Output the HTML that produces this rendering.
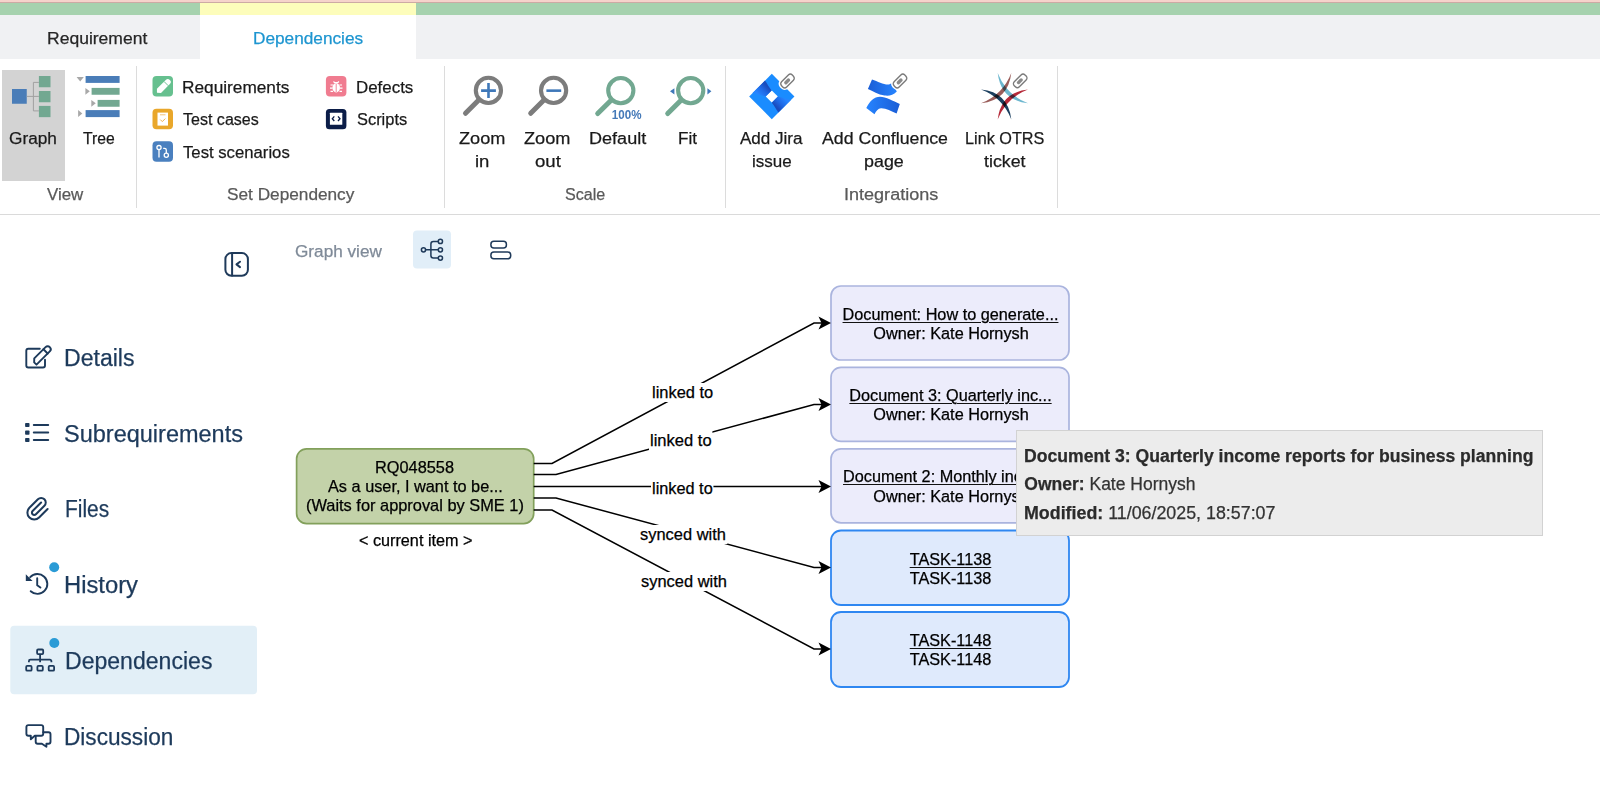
<!DOCTYPE html>
<html><head><meta charset="utf-8">
<style>
*{margin:0;padding:0;box-sizing:border-box}
html,body{width:1600px;height:792px;overflow:hidden;background:#fff}
body{position:relative;font-family:"Liberation Sans",sans-serif}
.t{position:absolute;white-space:pre;line-height:1;-webkit-text-stroke:0.25px currentColor}
.a{position:absolute}
svg{position:absolute;overflow:visible}
</style></head><body>
<!-- top bars -->
<div class="a" style="left:0;top:0;width:1600px;height:3px;background:#f6d3cb"></div>
<div class="a" style="left:0;top:2px;width:1600px;height:1px;background:#cdaaa4"></div>
<div class="a" style="left:0;top:3px;width:1600px;height:12px;background:#a6d2ae"></div>
<div class="a" style="left:0;top:15px;width:1600px;height:44px;background:#f0f1f3"></div>
<div class="a" style="left:200px;top:3px;width:216px;height:12px;background:#fdfdbb"></div>
<div class="a" style="left:200px;top:15px;width:216px;height:44px;background:#fff"></div>
<!-- ribbon -->
<div class="a" style="left:2px;top:70px;width:63px;height:111px;background:#d3d3d3"></div>
<div class="a" style="left:136px;top:66px;width:1px;height:142px;background:#dcdcdc"></div>
<div class="a" style="left:444px;top:66px;width:1px;height:142px;background:#dcdcdc"></div>
<div class="a" style="left:725px;top:66px;width:1px;height:142px;background:#dcdcdc"></div>
<div class="a" style="left:1057px;top:66px;width:1px;height:142px;background:#dcdcdc"></div>
<div class="a" style="left:0;top:214px;width:1600px;height:1px;background:#dadada"></div>

<svg width="1600" height="792" style="left:0;top:0" viewBox="0 0 1600 792">
 <!-- Graph icon -->
 <rect x="12" y="89" width="14.75" height="14.75" fill="#4a7db8"/>
 <rect x="38.9" y="76" width="11.6" height="11.25" fill="#72a891"/>
 <rect x="38.9" y="91" width="11.6" height="11.25" fill="#72a891"/>
 <rect x="38.9" y="105.9" width="11.6" height="11.25" fill="#72a891"/>
 <path d="M26.75 96.4H38.9M33.4 82.4V110.9M33.4 82.4H38.9M33.4 110.9H38.9" stroke="#a0a0a0" stroke-width="1" fill="none"/>
 <!-- Tree icon -->
 <rect x="85.6" y="76" width="34" height="6.9" fill="#4a7db8"/>
 <rect x="91.6" y="87.9" width="28" height="6.85" fill="#72a891"/>
 <rect x="97.6" y="99.9" width="22" height="6.85" fill="#72a891"/>
 <rect x="85.6" y="110.1" width="34" height="7" fill="#4a7db8"/>
 <path d="M76.6 77.1H83.8L80.2 81.6Z" fill="#a8a8a8"/>
 <path d="M85.4 87.9L89.8 91.3L85.4 94.75Z" fill="#a8a8a8"/>
 <path d="M91.3 99.9L95.8 103.3L91.3 106.75Z" fill="#a8a8a8"/>
 <path d="M78.1 110.1L82.3 113.6L78.1 117.1Z" fill="#a8a8a8"/>
 <!-- Set dependency icons -->
 <rect x="152.5" y="76" width="20.5" height="20.5" rx="4" fill="#66c08f"/>
 <g transform="translate(163.2 86.6) rotate(-45)"><path d="M-8.8 0L-6 -2.9H6.5a2.9 2.9 0 0 1 0 5.8H-6Z" fill="#fff"/><path d="M4.2 -3V3" stroke="#66c08f" stroke-width="0.9"/></g>
 <rect x="152.5" y="108.8" width="20.5" height="20.5" rx="4" fill="#e9a72b"/>
 <rect x="157.5" y="112.6" width="10.5" height="13" fill="#fff"/>
 <path d="M160 114.8h5.5" stroke="#f3c37a" stroke-width="1"/>
 <path d="M160.3 119.6l2 2 3-3" stroke="#f0b04a" stroke-width="1" fill="none"/>
 <rect x="152.5" y="141.3" width="20.5" height="20.5" rx="4" fill="#4a80bf"/>
 <circle cx="159" cy="147.6" r="2.1" fill="none" stroke="#fff" stroke-width="1.3"/>
 <path d="M159 149.7V157.4" stroke="#fff" stroke-width="1.3"/>
 <circle cx="166.3" cy="155.3" r="2.1" fill="none" stroke="#fff" stroke-width="1.3"/>
 <path d="M163.2 148.3H164.5a1.8 1.8 0 0 1 1.8 1.8V153.2" stroke="#fff" stroke-width="1.3" fill="none"/>
 <rect x="325.9" y="76" width="20.5" height="20.5" rx="4" fill="#f07c90"/>
 <path d="M333.5 81.5l1.2 1.2h3l1.2-1.2M336.2 82.2v0" stroke="#fff" stroke-width="1.2" fill="none"/>
 <ellipse cx="336.2" cy="87.8" rx="3.8" ry="4.6" fill="#fff"/>
 <path d="M330.5 85h2.5M330 88.2h2.5M330.5 91.4h2.5M339.5 85h2.5M340 88.2h2.5M339.5 91.4h2.5" stroke="#fff" stroke-width="1.2"/>
 <path d="M336.2 84v8" stroke="#f07c90" stroke-width="0.9"/>
 <rect x="325.9" y="109" width="20.5" height="20.2" rx="3.5" fill="#0b1d48"/>
 <rect x="329.9" y="112.7" width="12.4" height="12.1" rx="0.5" fill="#fff"/>
 <path d="M334.3 116.4l-2 2.3 2 2.3M338 116.4l2 2.3-2 2.3" stroke="#0b1d48" stroke-width="1.3" fill="none"/>
 <!-- Zoom icons -->
 <g fill="none" stroke="#7c7c7c">
  <circle cx="488.4" cy="90.4" r="12.6" stroke-width="4.1"/>
  <path d="M478.5 100.3L465.5 113.3" stroke-width="5" stroke-linecap="round"/>
  <circle cx="553.6" cy="90.4" r="12.6" stroke-width="4.1"/>
  <path d="M543.7 100.3L530.7 113.3" stroke-width="5" stroke-linecap="round"/>
 </g>
 <path d="M481.1 90.65H495.9M488.5 83.1V97.9" stroke="#3f78b9" stroke-width="2.6"/>
 <path d="M546.4 90.65H561.2" stroke="#3f78b9" stroke-width="2.6"/>
 <g fill="none" stroke="#72a891">
  <circle cx="620.8" cy="90.6" r="12.6" stroke-width="4.1"/>
  <path d="M610.9 100.5L597.7 113.5" stroke-width="5" stroke-linecap="round"/>
  <circle cx="690.7" cy="90.6" r="12.6" stroke-width="4.1"/>
  <path d="M680.8 100.5L667.7 113.5" stroke-width="5" stroke-linecap="round"/>
 </g>
 <text x="611.8" y="118.8" font-family="Liberation Sans" font-size="13.4" font-weight="bold" fill="#4479b8" textLength="29.7" lengthAdjust="spacingAndGlyphs">100%</text>
 <path d="M674.4 88.3V94.4L670 91.35Z M707.4 88.3V94.4L711.4 91.35Z" fill="#3f78b9"/>
 <!-- Jira -->
 <g transform="translate(771.8 96.5) rotate(45)">
  <rect x="-16" y="-16" width="32" height="32" fill="#1a8cff"/>
  <rect x="-4.3" y="-4.3" width="8.6" height="8.6" fill="#fff"/>
 </g>
 <defs>
  <linearGradient id="jg1" gradientUnits="userSpaceOnUse" x1="758.5" y1="94.3" x2="766.8" y2="86"><stop offset="0" stop-color="#2684ff"/><stop offset="0.55" stop-color="#1f68e4"/><stop offset="1" stop-color="#1a4cbd"/></linearGradient>
  <linearGradient id="jg2" gradientUnits="userSpaceOnUse" x1="784.9" y1="98.8" x2="776.6" y2="107.1"><stop offset="0" stop-color="#2684ff"/><stop offset="0.55" stop-color="#1f68e4"/><stop offset="1" stop-color="#1a4cbd"/></linearGradient>
  <linearGradient id="cg1" x1="0" y1="0" x2="1" y2="0"><stop offset="0" stop-color="#1a5dd6"/><stop offset="1" stop-color="#2684ff"/></linearGradient>
  <linearGradient id="cg2" x1="0" y1="0" x2="1" y2="0"><stop offset="0" stop-color="#2684ff"/><stop offset="1" stop-color="#1a5dd6"/></linearGradient>
 </defs>
 <path d="M752.5 93L765 80.5C767.5 84 769 87.5 771.6 90.4L765.5 96.5Z" fill="url(#jg1)"/>
 <path d="M790.9 100.1L778.4 112.6C775.9 109.1 774.4 105.6 771.8 102.7L777.9 96.6Z" fill="url(#jg2)"/>
 <!-- Confluence -->
 <path d="M872 79.5C878 81.5 884 85 889 84.5L892 83L896.8 91.5C893 95.5 889 96 884.5 95.5C878 94.5 873 91 867.9 88.9Z" fill="url(#cg1)"/>
 <path d="M866.3 107.9C870 101 874 97 880 96.8C886 96.8 893 101 899.8 104.1L896.6 113.6C891 111 886 108 881 108.2C878 108.5 876 111 874.5 114.2Z" fill="url(#cg2)"/>
 <!-- OTRS -->
 <g style="isolation:isolate">
 <path d="M997.7 73Q1000.81 100.19 1028 103.3Q1006.19 94.81 997.7 73Z" fill="#6db7cf" style="mix-blend-mode:multiply"/>
 <path d="M1011.3 73Q1008.19 100.19 981 103.3Q1002.81 94.81 1011.3 73Z" fill="#9a5d5a" style="mix-blend-mode:multiply"/>
 <path d="M981 89.6Q1008.16 92.28 1011.3 119.5Q1002.84 97.72 981 89.6Z" fill="#1b3f5f" style="mix-blend-mode:multiply"/>
 <path d="M1028 89.6Q1000.84 92.28 997.7 119.5Q1006.16 97.72 1028 89.6Z" fill="#b52a3a" style="mix-blend-mode:multiply"/>
 </g>
 <!-- paperclip badges -->
 <g id="clip">
 <g transform="translate(787.5 81) rotate(-45)">
  <rect x="-8.6" y="-4.6" width="17.2" height="9.2" rx="3.6" fill="#fff" stroke="#fff" stroke-width="2.2"/>
  <rect x="-7.6" y="-3.6" width="15.2" height="7.2" rx="2.8" fill="#fff" stroke="#7a7a7a" stroke-width="1.4"/>
  <rect x="-4" y="-1.7" width="7" height="3.4" rx="1.6" fill="#8a8a8a"/>
 </g>
 <g transform="translate(900 81) rotate(-45)">
  <rect x="-8.6" y="-4.6" width="17.2" height="9.2" rx="3.6" fill="#fff" stroke="#fff" stroke-width="2.2"/>
  <rect x="-7.6" y="-3.6" width="15.2" height="7.2" rx="2.8" fill="#fff" stroke="#7a7a7a" stroke-width="1.4"/>
  <rect x="-4" y="-1.7" width="7" height="3.4" rx="1.6" fill="#8a8a8a"/>
 </g>
 <g transform="translate(1020.2 80.9) rotate(-45)">
  <rect x="-8.6" y="-4.6" width="17.2" height="9.2" rx="3.6" fill="#fff" stroke="#fff" stroke-width="1.2"/>
  <rect x="-7.6" y="-3.6" width="15.2" height="7.2" rx="2.8" fill="#fff" stroke="#7a7a7a" stroke-width="1.4"/>
  <rect x="-4" y="-1.7" width="7" height="3.4" rx="1.6" fill="#8a8a8a"/>
 </g>
 </g>

 <!-- view toolbar -->
 <rect x="413" y="230.6" width="38" height="38" rx="4" fill="#e1eef8"/>
 <g fill="none" stroke="#1f3a5a" stroke-width="1.6" stroke-linecap="round" stroke-linejoin="round">
  <rect x="225.4" y="253.1" width="22.5" height="22.6" rx="6" stroke-width="2"/>
  <path d="M232.1 253.5v22" stroke-width="2"/>
  <path d="M240 261.7l-3.5 2.7 3.5 2.7" stroke-width="2"/>
  <circle cx="423.5" cy="249.8" r="2.1" stroke-width="1.5"/>
  <path d="M425.6 249.8H438.3" stroke-width="1.5"/>
  <path d="M438.3 241.4H433.4a2.5 2.5 0 0 0 -2.5 2.5V255.6a2.5 2.5 0 0 0 2.5 2.5H438.3" stroke-width="1.5"/>
  <circle cx="440.4" cy="241.4" r="2.1" stroke-width="1.5"/>
  <circle cx="440.4" cy="249.8" r="2.1" stroke-width="1.5"/>
  <circle cx="440.4" cy="258.1" r="2.1" stroke-width="1.5"/>
  <rect x="490.9" y="241.2" width="15.5" height="6.8" rx="3" stroke-width="1.5"/>
  <rect x="490.9" y="252.1" width="19.8" height="6.6" rx="3" stroke-width="1.5"/>
 </g>

 <!-- sidebar -->
 <rect x="10.3" y="625.8" width="246.7" height="68.4" rx="4" fill="#e2eff7"/>
 <g fill="none" stroke="#1d3a5b" stroke-width="2" stroke-linecap="round" stroke-linejoin="round">
  <!-- details -->
  <path d="M39.8 348.7H28.3a2 2 0 0 0 -2 2V365.5a2 2 0 0 0 2 2H43a2 2 0 0 0 2 -2V359.8" stroke-width="1.9"/>
  <g transform="translate(42.3 354.9) rotate(-45)"><path d="M-11 -0.5V2.8H7.8a3 3 0 0 0 0 -6H-8.2Z" stroke-width="1.9"/><path d="M4.8 -3.2V2.8" stroke-width="1.9"/></g>
  <!-- list -->
  <path d="M33.8 425H48.2M33.8 432.4H48.2M33.8 439.9H48.2"/>
  <!-- files clip -->
  <path transform="translate(-0.4 -1)" d="M41.5 503.5l-8.5 8.5a2.3 2.3 0 0 0 3.3 3.3l8.5 -8.5a4.5 4.5 0 0 0 -6.5 -6.5l-8.5 8.5a6.8 6.8 0 0 0 9.7 9.7l8.5 -8.5"/>
  <!-- history -->
  <path d="M37.2 578.2v7l3.2 2.4" stroke-width="1.9"/>
  <path d="M30.7 591.2A9.9 9.9 0 1 0 30.2 577.2" stroke-width="1.9"/>
  <!-- dependencies sitemap -->
  <rect x="37.1" y="649.5" width="6.1" height="4.6" rx="1" stroke-width="1.8"/>
  <rect x="26.2" y="665.9" width="5.4" height="4.8" rx="1" stroke-width="1.8"/>
  <rect x="37.4" y="665.9" width="5.4" height="4.8" rx="1" stroke-width="1.8"/>
  <rect x="48.7" y="665.9" width="5.4" height="4.8" rx="1" stroke-width="1.8"/>
  <path d="M40.1 654.5V659.7M28.9 662.2V661.2a1.5 1.5 0 0 1 1.5 -1.5H49.9a1.5 1.5 0 0 1 1.5 1.5V662.2M40.1 659.7V662.2" stroke-width="1.8" stroke-linecap="butt"/>
  <!-- discussion -->
  <path d="M34.8 735.8H41.2a2 2 0 0 0 2 -2V727.1a2 2 0 0 0 -2 -2H28.4a2 2 0 0 0 -2 2V733.8a2 2 0 0 0 2 2H30.8V739.2L34.8 735.8Z" stroke-width="1.9"/>
  <path d="M43.2 732.2H48.5a2 2 0 0 1 2 2V741.8a2 2 0 0 1 -2 2H46.4V746.8L41.9 743.8H37.7a2 2 0 0 1 -2 -2V736" stroke-width="1.9"/>
 </g>
 <g fill="#1d3a5b">
  <rect x="25.1" y="422.9" width="4.4" height="4.2" rx="0.8"/>
  <rect x="25.1" y="430.5" width="4.4" height="4.2" rx="0.8"/>
  <rect x="25.1" y="437.9" width="4.4" height="4.2" rx="0.8"/>
 </g>
 <path d="M25.8 574.2V581H32.6Z" fill="#1d3a5b"/>
 <circle cx="54.2" cy="567.2" r="5" fill="#2a9bd6"/>
 <circle cx="54.3" cy="643" r="5" fill="#2a9bd6"/>

 <!-- graph nodes -->
 <rect x="296.6" y="448.8" width="237.1" height="74.8" rx="10" fill="#c3d2a9" stroke="#82a05b" stroke-width="1.7"/>
 <g fill="#ececfb" stroke="#aab4de" stroke-width="1.7">
  <rect x="831" y="286" width="238" height="74" rx="10"/>
  <rect x="831" y="367.3" width="238" height="74" rx="10"/>
  <rect x="831" y="448.8" width="238" height="74" rx="10"/>
 </g>
 <g fill="#dfeafc" stroke="#2f87f1" stroke-width="1.8">
  <rect x="831" y="530.5" width="238" height="74.5" rx="10"/>
  <rect x="831" y="612" width="238" height="75" rx="10"/>
 </g>
 <!-- edges -->
 <g fill="none" stroke="#000" stroke-width="1.5">
  <path d="M533.7 463.5H552L814 323H825"/>
  <path d="M533.7 474.5H556L814 404.5H825"/>
  <path d="M533.7 486.5H825"/>
  <path d="M533.7 498H556L814 567.5H825"/>
  <path d="M533.7 510H552L814 649H825"/>
 </g>
 <g fill="#000">
  <path d="M831 323L818.5 316.5L821.5 323L818.5 329.5Z"/>
  <path d="M831 404.5L818.5 398L821.5 404.5L818.5 411Z"/>
  <path d="M831 486.5L818.5 480L821.5 486.5L818.5 493Z"/>
  <path d="M831 567.5L818.5 561L821.5 567.5L818.5 574Z"/>
  <path d="M831 649L818.5 642.5L821.5 649L818.5 655.5Z"/>
 </g>
</svg>
<div class="t" style="left:47.49px;top:29.66px;font-size:17.3px;font-weight:normal;color:#262626;transform:scaleX(1.0139);transform-origin:0 0;">Requirement</div>
<div class="t" style="left:252.50px;top:29.66px;font-size:17.3px;font-weight:normal;color:#1d95d0;transform:scaleX(0.9968);transform-origin:0 0;">Dependencies</div>
<div class="t" style="left:9.30px;top:129.56px;font-size:17.3px;font-weight:normal;color:#1a1a1a;transform:scaleX(0.9975);transform-origin:0 0;">Graph</div>
<div class="t" style="left:83.00px;top:129.56px;font-size:17.3px;font-weight:normal;color:#1a1a1a;transform:scaleX(0.9101);transform-origin:0 0;">Tree</div>
<div class="t" style="left:47.20px;top:186.06px;font-size:17.3px;font-weight:normal;color:#595959;transform:scaleX(0.9770);transform-origin:0 0;">View</div>
<div class="t" style="left:181.90px;top:78.96px;font-size:17.3px;font-weight:normal;color:#1a1a1a;transform:scaleX(0.9978);transform-origin:0 0;">Requirements</div>
<div class="t" style="left:182.50px;top:111.36px;font-size:17.3px;font-weight:normal;color:#1a1a1a;transform:scaleX(0.9281);transform-origin:0 0;">Test cases</div>
<div class="t" style="left:182.50px;top:143.76px;font-size:17.3px;font-weight:normal;color:#1a1a1a;transform:scaleX(0.9665);transform-origin:0 0;">Test scenarios</div>
<div class="t" style="left:355.52px;top:79.16px;font-size:17.3px;font-weight:normal;color:#1a1a1a;transform:scaleX(0.9785);transform-origin:0 0;">Defects</div>
<div class="t" style="left:356.50px;top:111.36px;font-size:17.3px;font-weight:normal;color:#1a1a1a;transform:scaleX(0.9497);transform-origin:0 0;">Scripts</div>
<div class="t" style="left:226.70px;top:185.86px;font-size:17.3px;font-weight:normal;color:#595959;transform:scaleX(0.9966);transform-origin:0 0;">Set Dependency</div>
<div class="t" style="left:458.80px;top:129.76px;font-size:17.3px;font-weight:normal;color:#1a1a1a;transform:scaleX(1.0485);transform-origin:0 0;">Zoom</div>
<div class="t" style="left:474.93px;top:153.16px;font-size:17.3px;font-weight:normal;color:#1a1a1a;transform:scaleX(1.0727);transform-origin:0 0;">in</div>
<div class="t" style="left:524.40px;top:129.76px;font-size:17.3px;font-weight:normal;color:#1a1a1a;transform:scaleX(1.0508);transform-origin:0 0;">Zoom</div>
<div class="t" style="left:534.80px;top:153.16px;font-size:17.3px;font-weight:normal;color:#1a1a1a;transform:scaleX(1.0775);transform-origin:0 0;">out</div>
<div class="t" style="left:588.95px;top:129.76px;font-size:17.3px;font-weight:normal;color:#1a1a1a;transform:scaleX(1.0453);transform-origin:0 0;">Default</div>
<div class="t" style="left:678.21px;top:129.76px;font-size:17.3px;font-weight:normal;color:#1a1a1a;transform:scaleX(0.9894);transform-origin:0 0;">Fit</div>
<div class="t" style="left:565.30px;top:186.06px;font-size:17.3px;font-weight:normal;color:#595959;transform:scaleX(0.9315);transform-origin:0 0;">Scale</div>
<div class="t" style="left:740.30px;top:129.76px;font-size:17.3px;font-weight:normal;color:#1a1a1a;transform:scaleX(0.9861);transform-origin:0 0;">Add Jira</div>
<div class="t" style="left:751.62px;top:153.16px;font-size:17.3px;font-weight:normal;color:#1a1a1a;transform:scaleX(0.9837);transform-origin:0 0;">issue</div>
<div class="t" style="left:821.70px;top:129.76px;font-size:17.3px;font-weight:normal;color:#1a1a1a;transform:scaleX(1.0240);transform-origin:0 0;">Add Confluence</div>
<div class="t" style="left:864.47px;top:153.16px;font-size:17.3px;font-weight:normal;color:#1a1a1a;transform:scaleX(1.0344);transform-origin:0 0;">page</div>
<div class="t" style="left:964.86px;top:129.76px;font-size:17.3px;font-weight:normal;color:#1a1a1a;transform:scaleX(0.9388);transform-origin:0 0;">Link OTRS</div>
<div class="t" style="left:983.90px;top:153.16px;font-size:17.3px;font-weight:normal;color:#1a1a1a;transform:scaleX(1.0288);transform-origin:0 0;">ticket</div>
<div class="t" style="left:843.96px;top:186.06px;font-size:17.3px;font-weight:normal;color:#595959;transform:scaleX(1.0439);transform-origin:0 0;">Integrations</div>
<div class="t" style="left:295.00px;top:243.26px;font-size:17.3px;font-weight:normal;color:#7f8a98;transform:scaleX(0.9941);transform-origin:0 0;">Graph view</div>
<div class="t" style="left:64.00px;top:346.63px;font-size:23px;font-weight:normal;color:#1d3a5b;transform:scaleX(1.0029);transform-origin:0 0;">Details</div>
<div class="t" style="left:63.98px;top:423.03px;font-size:23px;font-weight:normal;color:#1d3a5b;transform:scaleX(1.0216);transform-origin:0 0;">Subrequirements</div>
<div class="t" style="left:64.59px;top:498.33px;font-size:23px;font-weight:normal;color:#1d3a5b;transform:scaleX(0.9116);transform-origin:0 0;">Files</div>
<div class="t" style="left:64.47px;top:573.93px;font-size:23px;font-weight:normal;color:#1d3a5b;transform:scaleX(1.0343);transform-origin:0 0;">History</div>
<div class="t" style="left:64.50px;top:650.13px;font-size:23px;font-weight:normal;color:#1d3a5b;transform:scaleX(1.0024);transform-origin:0 0;">Dependencies</div>
<div class="t" style="left:64.42px;top:725.93px;font-size:23px;font-weight:normal;color:#1d3a5b;transform:scaleX(0.9834);transform-origin:0 0;">Discussion</div>
<div class="t" style="left:375.09px;top:458.79px;font-size:16.2px;font-weight:normal;color:#000;transform:scaleX(1.0091);transform-origin:0 0;">RQ048558</div>
<div class="t" style="left:327.70px;top:477.99px;font-size:16.2px;font-weight:normal;color:#000;transform:scaleX(1.0066);transform-origin:0 0;">As a user, I want to be...</div>
<div class="t" style="left:305.99px;top:497.49px;font-size:16.2px;font-weight:normal;color:#000;transform:scaleX(1.0121);transform-origin:0 0;">(Waits for approval by SME 1)</div>
<div class="t" style="left:359.00px;top:531.59px;font-size:16.2px;font-weight:normal;color:#000;transform:scaleX(1.0008);transform-origin:0 0;">&lt; current item &gt;</div>
<div class="t" style="left:652.18px;top:384.29px;font-size:16.2px;font-weight:normal;color:#000;background:#fff;padding:1px 1px 2px 1px;margin:-1px 0 0 -1px;transform:scaleX(1.0154);transform-origin:0 0;">linked to</div>
<div class="t" style="left:650.18px;top:431.79px;font-size:16.2px;font-weight:normal;color:#000;background:#fff;padding:1px 1px 2px 1px;margin:-1px 0 0 -1px;transform:scaleX(1.0221);transform-origin:0 0;">linked to</div>
<div class="t" style="left:652.29px;top:479.79px;font-size:16.2px;font-weight:normal;color:#000;background:#fff;padding:1px 1px 2px 1px;margin:-1px 0 0 -1px;transform:scaleX(1.0069);transform-origin:0 0;">linked to</div>
<div class="t" style="left:639.50px;top:525.59px;font-size:16.2px;font-weight:normal;color:#000;background:#fff;padding:1px 1px 2px 1px;margin:-1px 0 0 -1px;transform:scaleX(1.0159);transform-origin:0 0;">synced with</div>
<div class="t" style="left:640.90px;top:573.09px;font-size:16.2px;font-weight:normal;color:#000;background:#fff;padding:1px 1px 2px 1px;margin:-1px 0 0 -1px;transform:scaleX(1.0159);transform-origin:0 0;">synced with</div>
<div class="t" style="left:842.56px;top:305.64px;font-size:16.25px;color:#000;text-decoration:underline;text-decoration-thickness:1.2px;text-underline-offset:1.9px;text-decoration-color:#111;">Document: How to generate...</div>
<div class="t" style="left:873.35px;top:325.04px;font-size:16.25px;color:#000;">Owner: Kate Hornysh</div>
<div class="t" style="left:849.35px;top:386.94px;font-size:16.25px;color:#000;text-decoration:underline;text-decoration-thickness:1.2px;text-underline-offset:1.9px;text-decoration-color:#111;">Document 3: Quarterly inc...</div>
<div class="t" style="left:873.35px;top:406.34px;font-size:16.25px;color:#000;">Owner: Kate Hornysh</div>
<div class="t" style="left:843.03px;top:468.44px;font-size:16.25px;color:#000;text-decoration:underline;text-decoration-thickness:1.2px;text-underline-offset:1.9px;text-decoration-color:#111;">Document 2: Monthly incom...</div>
<div class="t" style="left:873.35px;top:487.84px;font-size:16.25px;color:#000;">Owner: Kate Hornysh</div>
<div class="t" style="left:909.70px;top:550.84px;font-size:16.25px;color:#000;text-decoration:underline;text-decoration-thickness:1.2px;text-underline-offset:1.9px;text-decoration-color:#111;">TASK-1138</div>
<div class="t" style="left:909.72px;top:569.54px;font-size:16.25px;color:#000;">TASK-1138</div>
<div class="t" style="left:909.70px;top:632.34px;font-size:16.25px;color:#000;text-decoration:underline;text-decoration-thickness:1.2px;text-underline-offset:1.9px;text-decoration-color:#111;">TASK-1148</div>
<div class="t" style="left:909.72px;top:651.04px;font-size:16.25px;color:#000;">TASK-1148</div>
<div class="a" style="left:1016px;top:430px;width:527px;height:106px;background:#ececec;border:1px solid #d2d2d2"></div>
<div class="t" style="left:1023.95px;top:447.69px;font-size:17.5px;color:#2b2b2b;font-weight:bold;transform:scaleX(1.0055);transform-origin:0 0">Document 3: Quarterly income reports for business planning</div>
<div class="t" style="left:1024.30px;top:476.39px;font-size:17.5px;color:#333"><b style="color:#2b2b2b">Owner:</b> Kate Hornysh</div>
<div class="t" style="left:1023.95px;top:504.99px;font-size:17.5px;color:#333;transform:scaleX(1.019);transform-origin:0 0"><b style="color:#2b2b2b">Modified:</b> 11/06/2025, 18:57:07</div>
</body></html>
